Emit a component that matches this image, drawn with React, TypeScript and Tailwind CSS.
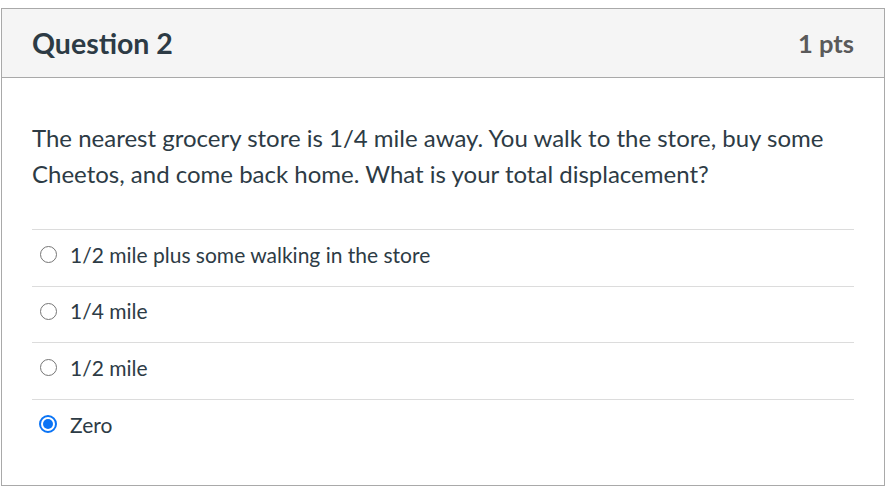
const options = [
  { label: "1/2 mile plus some walking in the store", checked: false },
  { label: "1/4 mile", checked: false },
  { label: "1/2 mile", checked: false },
  { label: "Zero", checked: true },
];

function Radio({ checked }: { checked: boolean }) {
  if (checked) {
    return (
      <span className="flex h-[18px] w-[18px] shrink-0 items-center justify-center rounded-full border-2 border-[#0b74f5] bg-white">
        <span className="h-[10px] w-[10px] rounded-full bg-[#0b74f5]" />
      </span>
    );
  }
  return <span className="ml-px h-[17px] w-[17px] shrink-0 rounded-full border-[1.5px] border-[#767676] bg-white" />;
}

export default function App() {
  return (
    <div className="min-h-screen bg-white pl-px pt-2" style={{ fontFamily: "Lato, 'Open Sans', sans-serif" }}>
      <div className="flex h-[478px] w-[884px] flex-col border border-[#a9a9a9]">
        {/* header */}
        <div className="flex h-[69px] shrink-0 items-center justify-between border-b border-[#a9a9a9] bg-[#f5f5f5] px-[30px]">
          <h2 className="text-[28.5px] font-bold text-[#2d3b45]">Question 2</h2>
          <span className="text-[25.5px] font-bold text-[#5a5a5a]">1 pts</span>
        </div>

        {/* body */}
        <div className="px-[30px] pt-[42px]">
          <p className="text-[24px] leading-[36px] text-[#2d3b45]">
            The nearest grocery store is 1/4 mile away. You walk to the store, buy some Cheetos, and come back home. What is your total displacement?
          </p>
          <div className="mt-[37px]">
            {options.map((o) => (
              <div key={o.label} className="flex h-[56.7px] items-center gap-[13px] border-t border-[#dcdcdc] pb-[7px] pl-[7px]">
                <Radio checked={o.checked} />
                <span className="text-[21px] text-[#2d3b45]">{o.label}</span>
              </div>
            ))}
          </div>
        </div>
      </div>
    </div>
  );
}
